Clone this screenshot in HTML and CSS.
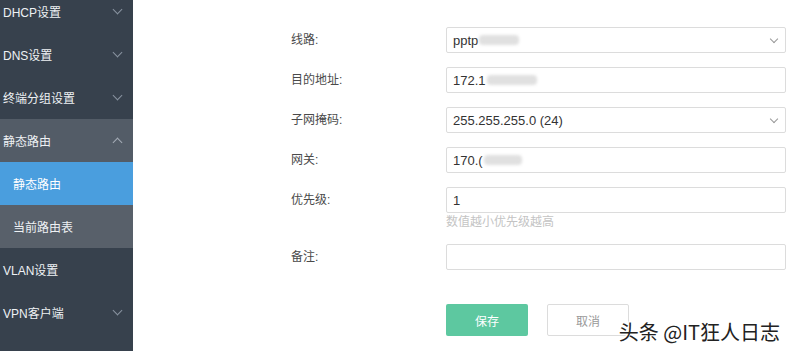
FILE: index.html
```html
<!DOCTYPE html>
<html lang="zh-CN">
<head>
  <meta charset="UTF-8">
  <meta name="viewport" content="width=device-width, initial-scale=1.0">
  <title>静态路由</title>
  <link rel="stylesheet" href="styles.css">
</head>
<body>

  <div class="layout">
    <!-- Sidebar -->
    <aside class="sidebar">
      <ul class="menu">
        <li class="menu-item">DHCP设置<span class="arrow down"></span></li>
        <li class="menu-item">DNS设置<span class="arrow down"></span></li>
        <li class="menu-item">终端分组设置<span class="arrow down"></span></li>
        <li class="menu-item open">静态路由<span class="arrow up"></span></li>
        <li class="sub-item active">静态路由</li>
        <li class="sub-item">当前路由表</li>
        <li class="menu-item">VLAN设置</li>
        <li class="menu-item">VPN客户端<span class="arrow down"></span></li>
        <li class="menu-item deep">设置</li>
      </ul>
    </aside>

    <!-- Form -->
    <main class="content">
      <form class="route-form">
        <div class="row">
          <label>线路:</label>
          <div class="field select">pptp<span class="blur w40"></span><span class="arrow-sm"></span></div>
        </div>
        <div class="row">
          <label>目的地址:</label>
          <div class="field">172.1<span class="blur w50"></span></div>
        </div>
        <div class="row">
          <label>子网掩码:</label>
          <div class="field select">255.255.255.0 (24)<span class="arrow-sm"></span></div>
        </div>
        <div class="row">
          <label>网关:</label>
          <div class="field">170.(<span class="blur w36"></span></div>
        </div>
        <div class="row top">
          <label>优先级:</label>
          <div class="group">
            <div class="field">1</div>
            <p class="hint">数值越小优先级越高</p>
          </div>
        </div>
        <div class="row">
          <label>备注:</label>
          <div class="field"></div>
        </div>
        <div class="actions">
          <button type="button" class="btn save">保存</button>
          <button type="button" class="btn cancel">取消</button>
        </div>
      </form>
    </main>
  </div>

  <div class="watermark">头条 @IT狂人日志</div>

</body>
</html>
```

FILE: styles.css
```css
* { margin: 0; padding: 0; box-sizing: border-box; }
html, body { height: 100%; overflow: hidden; }
body {
  font-family: "Liberation Sans", "Noto Sans CJK SC", sans-serif;
  background: #fff; color: #444; position: relative;
}

.layout { display: flex; height: 100%; }

/* Sidebar */
.sidebar { width: 133px; flex-shrink: 0; background: #37414d; overflow: hidden; }
.menu { list-style: none; margin-top: -10px; }
.menu-item, .sub-item {
  height: 43px; display: flex; align-items: center; justify-content: space-between;
  padding: 0 10px 0 3px; font-size: 12px; color: #eef1f4;
}
.menu-item.open { background: #535c67; }
.sub-item { padding-left: 13px; background: #58606a; }
.sub-item.active { background: #4a9ede; color: #fff; }
.menu-item.deep { padding-left: 35px; padding-top: 8px; }

.arrow {
  width: 7px; height: 7px;
  border-right: 1px solid #8893a0; border-bottom: 1px solid #8893a0;
  margin-right: 2px;
}
.arrow.down { transform: rotate(45deg); margin-top: -4px; }
.arrow.up { transform: rotate(-135deg); margin-top: 4px; border-color: #a4acb6; }

/* Form */
.content { flex: 1; padding: 27px 4px 0 158px; }
.row { display: flex; align-items: center; margin-bottom: 14px; }
.row.top { align-items: flex-start; margin-bottom: 13px; }
.row label { width: 155px; flex-shrink: 0; font-size: 12px; color: #4a4a4a; line-height: 26px; }
.group { flex: 1; }
.field {
  flex: 1; height: 26px; border: 1px solid #dcdcdc; border-radius: 2px;
  display: flex; align-items: center; padding: 0 6px;
  font-size: 13px; color: #333; position: relative;
}
.select { padding-right: 26px; }
.arrow-sm {
  position: absolute; right: 8px; top: 8px;
  width: 6px; height: 6px;
  border-right: 1px solid #999; border-bottom: 1px solid #999;
  transform: rotate(45deg);
}
.blur {
  display: inline-block; height: 10px; border-radius: 4px;
  background: #e0e0e0; filter: blur(1.5px); margin-left: 1px;
}
.w40 { width: 40px; }
.w50 { width: 50px; }
.w36 { width: 38px; }
.hint { font-size: 12px; color: #c4c4c4; line-height: 17px; margin-top: 1px; }

.actions { display: flex; gap: 19px; padding-left: 155px; margin-top: 34px; }
.btn {
  width: 82px; height: 32px; font-size: 12px;
  font-family: "Liberation Sans", "Noto Sans CJK SC", sans-serif;
  border-radius: 2px; cursor: pointer;
}
.save { background: #5dc8a0; color: #fff; border: none; }
.cancel { background: #fff; color: #999; border: 1px solid #dcdcdc; }

/* Watermark */
.watermark {
  position: absolute; right: 10px; bottom: 6px;
  font-family: "Noto Sans CJK SC", sans-serif; font-size: 20px; line-height: 26px; color: #222;
  text-shadow: 1px 0 #fff, -1px 0 #fff, 0 1px #fff, 0 -1px #fff, 1px 1px #fff, -1px -1px #fff;
}
```
